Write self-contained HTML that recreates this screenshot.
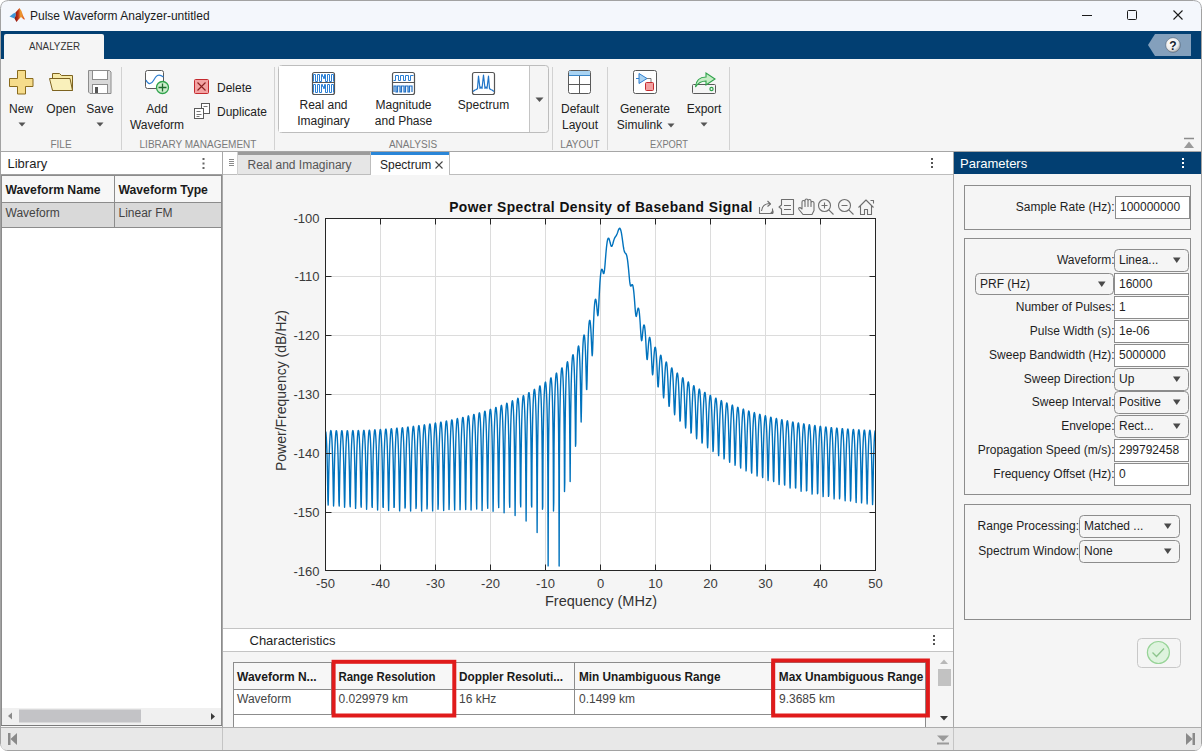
<!DOCTYPE html>
<html><head><meta charset="utf-8">
<style>
*{box-sizing:border-box;margin:0;padding:0}
html,body{width:1202px;height:751px;overflow:hidden;background:#ffffff}
svg{position:absolute;left:0;top:0;display:block}
text{font-family:"Liberation Sans",sans-serif}
</style></head><body>
<svg width="1202" height="751" viewBox="0 0 1202 751">
<defs>
<radialGradient id="hg" cx="0.4" cy="0.35" r="0.75"><stop offset="0" stop-color="#ffffff"/><stop offset="0.6" stop-color="#ececec"/><stop offset="1" stop-color="#8f8f8f"/></radialGradient>
<clipPath id="axclip"><rect x="325.5" y="218.5" width="550" height="352"/></clipPath>
<clipPath id="winclip"><rect x="0" y="0" width="1202" height="751" rx="8" ry="8"/></clipPath>
</defs>
<g clip-path="url(#winclip)">
<!-- window background -->
<rect x="0" y="0" width="1202" height="751" fill="#f5f5f5"/>
<!-- title bar -->
<rect x="0" y="0" width="1202" height="31" fill="#f4f7fc"/>
<defs><linearGradient id="lg" x1="0" y1="0" x2="1" y2="0"><stop offset="0" stop-color="#7a1510"/><stop offset="0.35" stop-color="#c0321a"/><stop offset="0.6" stop-color="#f0a232"/><stop offset="1" stop-color="#d8401c"/></linearGradient></defs>
<path d="M9.5 16.5 L13.5 13.5 L15.5 12.5 L16 15 L14.5 18.5 L12 17.5 Z" fill="#3d95d8"/>
<path d="M15.5 12.5 L19.5 8 L21.5 11 L23 15.5 L25 19.5 L23.5 19.2 L21 17 L18.5 19.5 L16.5 22 L14.5 18.5 L16 15 Z" fill="url(#lg)"/>
<text x="30" y="19.5" font-size="12" fill="#1b1b1b">Pulse Waveform Analyzer-untitled</text>
<line x1="1082" y1="15.5" x2="1092" y2="15.5" stroke="#1b1b1b" stroke-width="1"/>
<rect x="1127.5" y="10.5" width="9" height="9" rx="1" fill="none" stroke="#1b1b1b" stroke-width="1"/>
<path d="M1173.5 10.5 L1182.5 19.5 M1182.5 10.5 L1173.5 19.5" stroke="#1b1b1b" stroke-width="1.1"/>
<!-- blue band -->
<rect x="0" y="31" width="1202" height="28" fill="#023f72"/>
<path d="M4 59 L4 36 Q4 34 6 34 L102 34 Q104 34 104 36 L104 59 Z" fill="#f5f5f5"/>
<text x="29" y="50" font-size="11" fill="#333" textLength="51" lengthAdjust="spacingAndGlyphs">ANALYZER</text>
<path d="M1155 34 L1191 34 L1191 56 L1155 56 L1148 45 Z" fill="#84a0bc"/>
<circle cx="1173" cy="45" r="7.3" fill="url(#hg)" stroke="#2b3f55" stroke-opacity="0.55" stroke-width="0.8"/>
<text x="1173" y="49.5" font-size="12" font-weight="bold" text-anchor="middle" fill="#15212e">?</text>
<!-- toolstrip -->
<rect x="0" y="59" width="1202" height="92" fill="#f5f5f5"/>
<line x1="0" y1="151.5" x2="1202" y2="151.5" stroke="#a6a6a6" stroke-width="1"/>
<!-- FILE -->
<path d="M17.5 70.5 h8 v8 h7.5 v8 h-7.5 v7.5 h-8 v-7.5 h-8 v-8 h8 z" fill="#f6dc8b" stroke="#8a6b1c" stroke-width="1"/>
<path d="M52.5 90.5 V73.5 H59.5 L61.5 75.5 H72.5 V90.5 Z" fill="#f6e9a6" stroke="#7d6320" stroke-width="1"/>
<path d="M49.5 78.5 H70 L72.5 90.5 H52.5 Z" fill="#f9f0bb" stroke="#7d6320" stroke-width="1"/>
<path d="M88.5 70.5 h21 l1.5 1.5 v21.5 h-21 l-1.5 -1.5 z" fill="#d9d9d9" stroke="#8c8c8c" stroke-width="1"/>
<rect x="92.5" y="70.5" width="15" height="9" fill="#ffffff" stroke="#8c8c8c" stroke-width="1"/>
<rect x="92.5" y="84.5" width="15" height="9" fill="#ffffff" stroke="#8c8c8c" stroke-width="1"/>
<rect x="95" y="87" width="3" height="6" fill="#555"/>
<text x="21" y="113" font-size="12" text-anchor="middle" fill="#222">New</text>
<text x="61" y="113" font-size="12" text-anchor="middle" fill="#222">Open</text>
<text x="100" y="113" font-size="12" text-anchor="middle" fill="#222">Save</text>
<path d="M18.5 122.5 h7 l-3.5 4 z" fill="#555"/>
<path d="M96.5 122.5 h7 l-3.5 4 z" fill="#555"/>
<text x="61" y="148" font-size="10" text-anchor="middle" fill="#7a7a7a">FILE</text>
<line x1="121.5" y1="67" x2="121.5" y2="150" stroke="#d2d2d2"/>
<!-- LIBRARY MANAGEMENT -->
<rect x="145.5" y="70.5" width="18" height="18" rx="2" fill="#fff" stroke="#5a5a5a"/>
<path d="M146 80 C148 84.5,151 85,153.5 80.5 S158 73,163.5 77" fill="none" stroke="#2f7fd0" stroke-width="1.2"/>
<circle cx="162.5" cy="87.5" r="6" fill="#cdeecd" stroke="#2ea24a" stroke-width="1.3"/>
<path d="M162.5 83.5 v8 M158.5 87.5 h8" stroke="#1f6b2e" stroke-width="1.3"/>
<text x="157" y="113" font-size="12" text-anchor="middle" fill="#222">Add</text>
<text x="157" y="128.7" font-size="12" text-anchor="middle" fill="#222">Waveform</text>
<rect x="194.5" y="79.5" width="14" height="14" rx="1" fill="#f3a3a3" stroke="#c42a2f"/>
<path d="M197.5 82.5 L205.5 90.5 M205.5 82.5 L197.5 90.5" stroke="#8a1f1f" stroke-width="1.1"/>
<text x="217" y="91.6" font-size="12" fill="#222">Delete</text>
<rect x="201.5" y="103.5" width="8" height="10" fill="#fff" stroke="#5a5a5a"/>
<rect x="194.5" y="108.5" width="9" height="10" fill="#fff" stroke="#5a5a5a"/>
<path d="M203.5 106.5 h4 M196.5 111.5 h4 M196.5 114.5 h5 M196.5 116.5 h3" stroke="#777"/>
<text x="217" y="115.7" font-size="12" fill="#222">Duplicate</text>
<text x="198" y="148" font-size="10" text-anchor="middle" fill="#7a7a7a">LIBRARY MANAGEMENT</text>
<line x1="274.5" y1="67" x2="274.5" y2="150" stroke="#d2d2d2"/>
<!-- ANALYSIS gallery -->
<rect x="278.5" y="65.5" width="270" height="67" rx="3" fill="#f5f5f5" stroke="#bdbdbd"/>
<rect x="279" y="66" width="250" height="66" fill="#ffffff"/>
<line x1="529.5" y1="66" x2="529.5" y2="132" stroke="#c4c4c4"/>
<path d="M535.5 97.5 h8 l-4 4.5 z" fill="#555"/>
<rect x="312.5" y="72.5" width="22" height="22" rx="2" fill="#fff" stroke="#555" stroke-width="1.2"/>
<line x1="313" y1="82.5" x2="334" y2="82.5" stroke="#555" stroke-width="1"/>
<path d="M313.5 81.5 H313.5 V74.5 H315.5 V81.5 H317.5 V74.5 H319.5 V81.5 H321.5 V74.5 H322.5 V76.5 H323.5 V78.5 H324.5 V74.5 H325.5 M325.5 74.5 H325.5 V81.5 H327.5 V74.5 H329.5 V81.5 H331.5 V74.5 H333.5 V81.5" fill="none" stroke="#2a7fd4" stroke-width="1"/>
<path d="M313.5 92.5 H313.5 V84.5 H315.5 V92.5 H317.5 V84.5 H319.5 V92.5 H321.5 V84.5 H322.5 V86.5 H323.5 V88.5 H324.5 V84.5 H325.5 M325.5 84.5 H325.5 V92.5 H327.5 V84.5 H329.5 V92.5 H331.5 V84.5 H333.5 V92.5" fill="none" stroke="#2a7fd4" stroke-width="1"/>
<rect x="392.5" y="72.5" width="22" height="22" rx="2" fill="#fff" stroke="#555" stroke-width="1.2"/>
<line x1="393" y1="82.5" x2="414" y2="82.5" stroke="#555" stroke-width="1"/>
<path d="M393.5 80.5 H395.5 V75.5 H398.5 V80.5 H400.5 V75.5 H403.5 V80.5 H405.5 V75.5 H408.5 V80.5 H410.5 V75.5 H413.5" fill="none" stroke="#2a7fd4" stroke-width="1"/>
<path d="M394 92 V86 H396 V92 H397.5 V86 H400 V92 H401.5 V86 H404 V92 H405.5 V86 H408 V92 H409.5 V86 H412 V92" fill="none" stroke="#1f6fc4" stroke-width="1.2"/>
<rect x="472.5" y="72.5" width="22" height="22" rx="2" fill="#fff" stroke="#555" stroke-width="1.2"/>
<path d="M473 91.5 L475 90 L476.5 89.5 L477.5 88.5 L478.5 76 L480 88.5 L481 87 L482 88.5 L483.5 75 L485 88.5 L486 87 L487 88.5 L488.5 76 L489.5 88.5 L490.5 89.5 L492 90 L494 91.5" fill="none" stroke="#1f74c8" stroke-width="1.2" stroke-linejoin="round"/>
<text x="323.5" y="109" font-size="12" text-anchor="middle" fill="#222">Real and</text>
<text x="323.5" y="124.6" font-size="12" text-anchor="middle" fill="#222">Imaginary</text>
<text x="403.5" y="109" font-size="12" text-anchor="middle" fill="#222">Magnitude</text>
<text x="403.5" y="124.6" font-size="12" text-anchor="middle" fill="#222">and Phase</text>
<text x="483.5" y="109" font-size="12" text-anchor="middle" fill="#222">Spectrum</text>
<text x="413" y="148" font-size="10" text-anchor="middle" fill="#7a7a7a">ANALYSIS</text>
<line x1="552.5" y1="67" x2="552.5" y2="150" stroke="#d2d2d2"/>
<!-- LAYOUT -->
<rect x="568.5" y="70.5" width="22" height="23" rx="2" fill="#fff" stroke="#5a5a5a"/>
<rect x="569" y="71" width="21" height="4" fill="#a9d3f2"/>
<line x1="569" y1="75.5" x2="590" y2="75.5" stroke="#3a86c8"/>
<path d="M569 84.5 h21 M579.5 76 v17" stroke="#5a5a5a"/>
<text x="580" y="112.6" font-size="12" text-anchor="middle" fill="#222">Default</text>
<text x="580" y="128.5" font-size="12" text-anchor="middle" fill="#222">Layout</text>
<text x="580" y="148" font-size="10" text-anchor="middle" fill="#7a7a7a">LAYOUT</text>
<line x1="607.5" y1="67" x2="607.5" y2="150" stroke="#d2d2d2"/>
<!-- EXPORT -->
<rect x="633.5" y="70.5" width="23" height="23" rx="2" fill="#fff" stroke="#5a5a5a"/>
<path d="M636 78.5 h3 M649 78.5 h0 M639 73.5 v10 l8 -5 z" fill="#a9d3f2" stroke="#2f7fd0" stroke-width="1"/>
<path d="M647 78.5 h4 v4" fill="none" stroke="#5a5a5a" stroke-width="0.8"/>
<rect x="645.5" y="82.5" width="8" height="8" rx="1" fill="#f2a0a0" stroke="#c42a2f"/>
<text x="645" y="112.6" font-size="12" text-anchor="middle" fill="#222">Generate</text>
<text x="639.5" y="128.5" font-size="12" text-anchor="middle" fill="#222">Simulink</text>
<path d="M667.5 123.5 h7 l-3.5 4 z" fill="#555"/>
<rect x="692.5" y="84.5" width="23" height="9" rx="1" fill="#f5f5f5" stroke="#5a5a5a"/>
<circle cx="711.5" cy="89" r="1.6" fill="none" stroke="#2ea24a" stroke-width="1.2"/>
<path d="M695.5 87 C696 80,700 77,706 77 L706 73 L715 79 L706 85 L706 81 C701 81,698 83,695.5 87 Z" fill="#c5ecc5" stroke="#2ea24a" stroke-width="1.1"/>
<text x="704" y="112.6" font-size="12" text-anchor="middle" fill="#222">Export</text>
<path d="M700.5 122.5 h7 l-3.5 4 z" fill="#555"/>
<text x="669" y="148" font-size="10" text-anchor="middle" fill="#7a7a7a" textLength="38" lengthAdjust="spacingAndGlyphs">EXPORT</text>
<line x1="729.5" y1="67" x2="729.5" y2="150" stroke="#d2d2d2"/>
<!-- collapse toolstrip -->
<path d="M1184 138.5 h10" stroke="#8c8c8c" stroke-width="1.5"/>
<path d="M1184 148 l5 -6.5 5 6.5 z" fill="#9a9a9a"/>
<!-- ===== LIBRARY PANEL ===== -->
<rect x="1" y="152" width="221" height="575" fill="#ffffff"/>
<line x1="1" y1="174.5" x2="222" y2="174.5" stroke="#a0a0a0"/>
<text x="7.5" y="168" font-size="13" fill="#1e1e1e">Library</text>
<g fill="#666"><rect x="202.5" y="158" width="2" height="2"/><rect x="202.5" y="162.5" width="2" height="2"/><rect x="202.5" y="167" width="2" height="2"/></g>
<rect x="1.5" y="175.5" width="220" height="550" fill="#ffffff" stroke="#8c8c8c"/>
<rect x="2" y="176" width="219" height="26" fill="#f7f7f7"/>
<rect x="2" y="203" width="219" height="24" fill="#d9d9d9"/>
<line x1="2" y1="202.5" x2="221" y2="202.5" stroke="#8c8c8c"/>
<line x1="2" y1="227.5" x2="221" y2="227.5" stroke="#8c8c8c"/>
<line x1="114.5" y1="176" x2="114.5" y2="227" stroke="#8c8c8c"/>
<text x="5.5" y="193.5" font-size="12.2" font-weight="bold" fill="#1a1a1a">Waveform Name</text>
<text x="118.5" y="193.5" font-size="12.2" font-weight="bold" fill="#1a1a1a">Waveform Type</text>
<text x="5.5" y="216.5" font-size="12" fill="#444">Waveform</text>
<text x="118.5" y="216.5" font-size="12" fill="#444">Linear FM</text>
<!-- library h-scrollbar -->
<rect x="2" y="708" width="219" height="17" fill="#f0f0f0"/>
<rect x="19" y="709.5" width="122" height="13" fill="#c3c3c6"/>
<path d="M8 716 l4 -3.5 v7 z" fill="#8a8a8a"/>
<path d="M215 716.5 l-4 -3.5 v7 z" fill="#3a3a3a"/>
<line x1="1" y1="725.5" x2="222" y2="725.5" stroke="#7a7a7a"/><rect x="1" y="726" width="221" height="1" fill="#f7f7f7"/>
<line x1="222.5" y1="152" x2="222.5" y2="727" stroke="#a8a8a8"/>

<!-- ===== CENTER ===== -->
<rect x="223" y="152" width="730" height="23" fill="#ffffff"/>
<line x1="223" y1="174.5" x2="953" y2="174.5" stroke="#bdbdbd"/>
<path d="M229 159.5 h5 M229 161.5 h5 M229 163.5 h5 M229 165.5 h5" stroke="#8a8a8a"/>
<line x1="237.5" y1="152" x2="237.5" y2="175" stroke="#d0d0d0"/>
<rect x="238" y="152" width="133" height="23" fill="#e6e6e6"/>
<rect x="238" y="152" width="133" height="3" fill="#9c9c9c"/>
<line x1="370.5" y1="152" x2="370.5" y2="175" stroke="#bdbdbd"/><line x1="238" y1="174.5" x2="371" y2="174.5" stroke="#bdbdbd"/>
<text x="247.5" y="168.5" font-size="12" fill="#555">Real and Imaginary</text>
<rect x="371" y="152" width="78" height="23" fill="#ffffff"/>
<rect x="371" y="152" width="78" height="3" fill="#2a86d8"/>
<line x1="449.5" y1="152" x2="449.5" y2="175" stroke="#bdbdbd"/>
<text x="380" y="168.5" font-size="12" fill="#1e1e1e">Spectrum</text>
<path d="M435.5 161.5 l7 7 M442.5 161.5 l-7 7" stroke="#444" stroke-width="1.1"/>
<g fill="#555"><rect x="931" y="158" width="2" height="2"/><rect x="931" y="162" width="2" height="2"/><rect x="931" y="166" width="2" height="2"/></g>
<rect x="223" y="175" width="730" height="453" fill="#f5f5f5"/>
<line x1="223" y1="628.5" x2="953" y2="628.5" stroke="#c4c4c4"/>
<rect x="223" y="629" width="730" height="22" fill="#ffffff"/>
<line x1="223" y1="651.5" x2="953" y2="651.5" stroke="#c4c4c4"/>
<text x="249.5" y="644.8" font-size="13" fill="#1e1e1e">Characteristics</text>
<g fill="#555"><rect x="933" y="635" width="2" height="2"/><rect x="933" y="639" width="2" height="2"/><rect x="933" y="643" width="2" height="2"/></g>
<rect x="223" y="652" width="730" height="75" fill="#f5f5f5"/>
<rect x="233.5" y="662.5" width="692" height="65" fill="#ffffff" stroke="#8c8c8c"/>
<rect x="234" y="663" width="691" height="26" fill="#f7f7f7"/>
<line x1="234" y1="689.5" x2="925" y2="689.5" stroke="#8c8c8c"/>
<line x1="234" y1="714.5" x2="925" y2="714.5" stroke="#8c8c8c"/>
<path d="M331.5 663 v51 M455.5 663 v51 M574.5 663 v51 M771.5 663 v51" stroke="#8c8c8c"/>
<text x="237" y="680.5" font-size="12" font-weight="bold" fill="#1a1a1a">Waveform N...</text>
<text x="338.5" y="680.5" font-size="12" font-weight="bold" fill="#1a1a1a" textLength="97" lengthAdjust="spacingAndGlyphs">Range Resolution</text>
<text x="459" y="680.5" font-size="12" font-weight="bold" fill="#1a1a1a" textLength="104" lengthAdjust="spacingAndGlyphs">Doppler Resoluti...</text>
<text x="579" y="680.5" font-size="12" font-weight="bold" fill="#1a1a1a" textLength="141.5" lengthAdjust="spacingAndGlyphs">Min Unambiguous Range</text>
<text x="778.8" y="680.5" font-size="12" font-weight="bold" fill="#1a1a1a" textLength="144.5" lengthAdjust="spacingAndGlyphs">Max Unambiguous Range</text>
<text x="237" y="703.3" font-size="12" fill="#444">Waveform</text>
<text x="338.5" y="703.3" font-size="12" fill="#444">0.029979 km</text>
<text x="459" y="703.3" font-size="12" fill="#444">16 kHz</text>
<text x="579" y="703.3" font-size="12" fill="#444">0.1499 km</text>
<text x="779" y="703.3" font-size="12" fill="#444">9.3685 km</text>
<!-- v scrollbar -->
<rect x="937" y="652" width="16" height="75" fill="#f5f5f5"/>
<path d="M940 664 l4 -4.5 4 4.5 z" fill="#b8b8b8"/>
<rect x="938" y="669" width="13" height="17" fill="#c2c2c2"/>
<path d="M940 716 l4 4.5 4 -4.5 z" fill="#3a3a3a"/>
<!-- red highlight boxes -->
<rect x="333.6" y="661.8" width="120.7" height="53.7" fill="none" stroke="#e01b1b" stroke-width="4"/>
<rect x="773.2" y="660.5" width="154.7" height="55" fill="none" stroke="#e01b1b" stroke-width="4"/>
<line x1="953.5" y1="152" x2="953.5" y2="751" stroke="#a8a8a8"/>

<!-- ===== PARAMETERS ===== -->
<rect x="954" y="152" width="247" height="22" fill="#023f72"/>
<text x="960" y="167.8" font-size="13" fill="#ffffff">Parameters</text>
<g fill="#ffffff"><rect x="1182" y="158" width="2" height="2"/><rect x="1182" y="162" width="2" height="2"/><rect x="1182" y="166" width="2" height="2"/></g>
<rect x="954" y="174" width="247" height="553" fill="#f5f5f5"/>
<rect x="964.5" y="185.5" width="226" height="44" fill="none" stroke="#8c8c8c"/>
<rect x="964.5" y="238.5" width="226" height="256" fill="none" stroke="#8c8c8c"/>
<rect x="964.5" y="504.5" width="226" height="115" fill="none" stroke="#8c8c8c"/>
<text x="1114.5" y="211" font-size="12" text-anchor="end" fill="#1e1e1e">Sample Rate (Hz):</text>
<rect x="1115.5" y="196.5" width="74" height="22" fill="#ffffff" stroke="#8c8c8c"/><text x="1120" y="211" font-size="12" fill="#1e1e1e">100000000</text>
<text x="1114.5" y="264" font-size="12" text-anchor="end" fill="#1e1e1e">Waveform:</text>
<rect x="1114.5" y="249.5" width="74" height="22" rx="4" fill="#f5f5f5" stroke="#8c8c8c"/><text x="1119" y="264" font-size="12" fill="#1e1e1e">Linea...</text><path d="M1173 257.5 h7.5 l-3.75 5.5 z" fill="#4a4a4a"/>
<rect x="975.5" y="273.5" width="138" height="21" rx="4" fill="#f5f5f5" stroke="#8c8c8c"/><text x="980" y="288" font-size="12" fill="#1e1e1e">PRF (Hz)</text><path d="M1098 281.5 h7.5 l-3.75 5.5 z" fill="#4a4a4a"/>
<rect x="1114.5" y="273.5" width="74" height="21" fill="#ffffff" stroke="#8c8c8c"/><text x="1119" y="288" font-size="12" fill="#1e1e1e">16000</text>
<text x="1114.5" y="311" font-size="12" text-anchor="end" fill="#1e1e1e">Number of Pulses:</text>
<rect x="1114.5" y="296.5" width="74" height="22" fill="#ffffff" stroke="#8c8c8c"/><text x="1119" y="311" font-size="12" fill="#1e1e1e">1</text>
<text x="1114.5" y="335" font-size="12" text-anchor="end" fill="#1e1e1e">Pulse Width (s):</text>
<rect x="1114.5" y="320.5" width="74" height="22" fill="#ffffff" stroke="#8c8c8c"/><text x="1119" y="335" font-size="12" fill="#1e1e1e">1e-06</text>
<text x="1114.5" y="359" font-size="12" text-anchor="end" fill="#1e1e1e">Sweep Bandwidth (Hz):</text>
<rect x="1114.5" y="344.5" width="74" height="22" fill="#ffffff" stroke="#8c8c8c"/><text x="1119" y="359" font-size="12" fill="#1e1e1e">5000000</text>
<text x="1114.5" y="383" font-size="12" text-anchor="end" fill="#1e1e1e">Sweep Direction:</text>
<rect x="1114.5" y="368.5" width="74" height="22" rx="4" fill="#f5f5f5" stroke="#8c8c8c"/><text x="1119" y="383" font-size="12" fill="#1e1e1e">Up</text><path d="M1173 376.5 h7.5 l-3.75 5.5 z" fill="#4a4a4a"/>
<text x="1114.5" y="406" font-size="12" text-anchor="end" fill="#1e1e1e">Sweep Interval:</text>
<rect x="1114.5" y="391.5" width="74" height="22" rx="4" fill="#f5f5f5" stroke="#8c8c8c"/><text x="1119" y="406" font-size="12" fill="#1e1e1e">Positive</text><path d="M1173 399.5 h7.5 l-3.75 5.5 z" fill="#4a4a4a"/>
<text x="1114.5" y="430" font-size="12" text-anchor="end" fill="#1e1e1e">Envelope:</text>
<rect x="1114.5" y="415.5" width="74" height="22" rx="4" fill="#f5f5f5" stroke="#8c8c8c"/><text x="1119" y="430" font-size="12" fill="#1e1e1e">Rect...</text><path d="M1173 423.5 h7.5 l-3.75 5.5 z" fill="#4a4a4a"/>
<text x="1114.5" y="454" font-size="12" text-anchor="end" fill="#1e1e1e">Propagation Speed (m/s):</text>
<rect x="1114.5" y="439.5" width="74" height="22" fill="#ffffff" stroke="#8c8c8c"/><text x="1119" y="454" font-size="12" fill="#1e1e1e">299792458</text>
<text x="1114.5" y="478" font-size="12" text-anchor="end" fill="#1e1e1e">Frequency Offset (Hz):</text>
<rect x="1114.5" y="463.5" width="74" height="22" fill="#ffffff" stroke="#8c8c8c"/><text x="1119" y="478" font-size="12" fill="#1e1e1e">0</text>
<text x="1079" y="530" font-size="12" text-anchor="end" fill="#1e1e1e">Range Processing:</text>
<rect x="1079.5" y="515.5" width="100" height="22" rx="4" fill="#f5f5f5" stroke="#8c8c8c"/><text x="1084" y="530" font-size="12" fill="#1e1e1e">Matched ...</text><path d="M1164 523.5 h7.5 l-3.75 5.5 z" fill="#4a4a4a"/>
<text x="1079" y="555" font-size="12" text-anchor="end" fill="#1e1e1e">Spectrum Window:</text>
<rect x="1079.5" y="540.5" width="100" height="22" rx="4" fill="#f5f5f5" stroke="#8c8c8c"/><text x="1084" y="555" font-size="12" fill="#1e1e1e">None</text><path d="M1164 548.5 h7.5 l-3.75 5.5 z" fill="#4a4a4a"/>

<!-- apply button -->
<rect x="1137.5" y="638.5" width="43" height="29" rx="4" fill="#f5f5f5" stroke="#c8c8c8"/>
<circle cx="1158.4" cy="652.5" r="11" fill="#def3de" stroke="#98d498" stroke-width="1.2"/>
<path d="M1152.5 652.5 l4 4 l7.5 -8" fill="none" stroke="#8cc48c" stroke-width="1.3"/>

<!-- ===== STATUS BAR ===== -->
<rect x="0" y="728" width="1202" height="23" fill="#e8e8e8"/>
<line x1="0" y1="727.5" x2="1202" y2="727.5" stroke="#adadad"/>
<line x1="953.5" y1="728" x2="953.5" y2="751" stroke="#c4c4c4"/><line x1="222.5" y1="728" x2="222.5" y2="751" stroke="#c4c4c4"/>
<rect x="8" y="733" width="2.5" height="12" fill="#8a8a8a"/>
<path d="M17 733 v12 l-6.5 -6 z" fill="#8a8a8a"/>
<path d="M937 735.5 h12 l-6 6 z" fill="#9a9a9a"/>
<rect x="937" y="742.5" width="12" height="2" fill="#9a9a9a"/>
<rect x="1192.5" y="733" width="2.5" height="12" fill="#8a8a8a"/>
<path d="M1186 733 v12 l6.5 -6 z" fill="#8a8a8a"/>
<!-- window border -->
<path d="M8.5 0.5 H1193.5 Q1201.5 0.5 1201.5 8.5 V744.5 Q1201.5 750.5 1195.5 750.5 H6.5 Q0.5 750.5 0.5 744.5 V8.5 Q0.5 0.5 8.5 0.5 Z" fill="none" stroke="#a2a2a2"/>
</g>
<!-- ===== PLOT ===== -->
<rect x="325.5" y="218.5" width="550" height="352" fill="#ffffff"/>
<g stroke="#dcdcdc" stroke-width="1">
<path d="M380.5 219 v351 M435.5 219 v351 M490.5 219 v351 M545.5 219 v351 M600.5 219 v351 M655.5 219 v351 M710.5 219 v351 M765.5 219 v351 M820.5 219 v351"/>
<path d="M326 276.5 h549 M326 335.5 h549 M326 394.5 h549 M326 453.5 h549 M326 512.5 h549"/>
</g>
<path clip-path="url(#axclip)" d="M325.77 431.7L326.04 434.1L326.31 437.8L326.57 442.9L326.84 449.8L327.11 458.8L327.38 470.4L327.65 485.2L327.92 500.7L328.19 505.1L328.45 492.6L328.72 476.8L328.99 463.7L329.26 453.6L329.53 445.8L329.80 440.0L330.07 435.7L330.33 432.8L330.60 431.1L330.87 430.6L331.14 431.2L331.41 433.0L331.68 436.0L331.95 440.4L332.21 446.4L332.48 454.3L332.75 464.7L333.02 478.0L333.29 494.0L333.56 506.0L333.83 500.3L334.09 484.5L334.36 469.8L334.63 458.3L334.90 449.4L335.17 442.7L335.44 437.7L335.71 434.1L335.97 431.8L336.24 430.7L336.51 430.8L336.78 432.0L337.05 434.4L337.32 438.2L337.58 443.4L337.85 450.3L338.12 459.5L338.39 471.4L338.66 486.4L338.93 502.2L339.20 506.0L339.46 492.7L339.73 476.7L340.00 463.6L340.27 453.5L340.54 445.8L340.81 439.9L341.08 435.7L341.34 432.8L341.61 431.2L341.88 430.7L342.15 431.3L342.42 433.1L342.69 436.2L342.96 440.7L343.22 446.8L343.49 454.8L343.76 465.3L344.03 479.0L344.30 495.3L344.57 507.3L344.84 500.7L345.10 484.3L345.37 469.6L345.64 458.1L345.91 449.2L346.18 442.5L346.45 437.5L346.72 434.0L346.98 431.8L347.25 430.7L347.52 430.8L347.79 432.1L348.06 434.6L348.33 438.3L348.60 443.6L348.86 450.7L349.13 460.0L349.40 472.1L349.67 487.5L349.94 503.6L350.21 506.7L350.48 492.5L350.74 476.3L351.01 463.2L351.28 453.2L351.55 445.5L351.82 439.7L352.09 435.5L352.36 432.6L352.62 431.0L352.89 430.6L353.16 431.3L353.43 433.1L353.70 436.3L353.97 440.8L354.24 447.0L354.50 455.1L354.77 465.9L355.04 479.8L355.31 496.5L355.58 508.4L355.85 500.7L356.12 483.9L356.38 469.1L356.65 457.6L356.92 448.8L357.19 442.2L357.46 437.2L357.73 433.7L358.00 431.5L358.26 430.5L358.53 430.7L358.80 432.0L359.07 434.5L359.34 438.3L359.61 443.7L359.88 450.8L360.14 460.3L360.41 472.6L360.68 488.4L360.95 504.8L361.22 507.2L361.49 492.2L361.75 475.7L362.02 462.6L362.29 452.6L362.56 445.0L362.83 439.2L363.10 435.1L363.37 432.3L363.63 430.7L363.90 430.3L364.17 431.0L364.44 432.9L364.71 436.1L364.98 440.7L365.25 447.0L365.51 455.3L365.78 466.2L366.05 480.4L366.32 497.5L366.59 509.3L366.86 500.5L367.13 483.3L367.39 468.4L367.66 456.9L367.93 448.2L368.20 441.6L368.47 436.7L368.74 433.2L369.01 431.1L369.27 430.1L369.54 430.3L369.81 431.6L370.08 434.2L370.35 438.1L370.62 443.5L370.89 450.8L371.15 460.4L371.42 473.0L371.69 489.1L371.96 505.8L372.23 507.4L372.50 491.6L372.77 475.0L373.03 461.9L373.30 451.9L373.57 444.3L373.84 438.6L374.11 434.5L374.38 431.7L374.65 430.1L374.91 429.8L375.18 430.6L375.45 432.5L375.72 435.8L375.99 440.4L376.26 446.8L376.53 455.2L376.79 466.3L377.06 480.8L377.33 498.4L377.60 510.0L377.87 500.1L378.14 482.4L378.41 467.5L378.67 456.1L378.94 447.4L379.21 440.8L379.48 435.9L379.75 432.5L380.02 430.4L380.29 429.5L380.55 429.7L380.82 431.1L381.09 433.7L381.36 437.7L381.63 443.2L381.90 450.6L382.17 460.3L382.43 473.1L382.70 489.7L382.97 506.7L383.24 507.4L383.51 490.7L383.78 474.0L384.04 460.9L384.31 450.9L384.58 443.4L384.85 437.7L385.12 433.6L385.39 430.9L385.66 429.4L385.92 429.1L386.19 429.9L386.46 431.9L386.73 435.2L387.00 439.9L387.27 446.4L387.54 454.9L387.80 466.2L388.07 481.0L388.34 499.1L388.61 510.5L388.88 499.5L389.15 481.4L389.42 466.4L389.68 455.0L389.95 446.3L390.22 439.8L390.49 435.0L390.76 431.6L391.03 429.5L391.30 428.6L391.56 428.9L391.83 430.3L392.10 433.0L392.37 437.0L392.64 442.6L392.91 450.1L393.18 460.0L393.44 473.1L393.71 490.1L393.98 507.4L394.25 507.2L394.52 489.7L394.79 472.7L395.06 459.7L395.32 449.7L395.59 442.2L395.86 436.6L396.13 432.6L396.40 429.9L396.67 428.4L396.94 428.1L397.20 429.0L397.47 431.1L397.74 434.4L398.01 439.2L398.28 445.8L398.55 454.4L398.82 465.9L399.08 481.1L399.35 499.7L399.62 510.9L399.89 498.6L400.16 480.1L400.43 465.1L400.70 453.7L400.96 445.1L401.23 438.6L401.50 433.8L401.77 430.5L402.04 428.4L402.31 427.6L402.58 427.9L402.84 429.4L403.11 432.1L403.38 436.2L403.65 441.8L403.92 449.4L404.19 459.5L404.46 472.9L404.72 490.3L404.99 508.0L405.26 506.8L405.53 488.4L405.80 471.3L406.07 458.2L406.33 448.4L406.60 440.9L406.87 435.3L407.14 431.3L407.41 428.7L407.68 427.2L407.95 427.0L408.21 427.9L408.48 430.0L408.75 433.4L409.02 438.3L409.29 444.9L409.56 453.7L409.83 465.4L410.09 481.0L410.36 500.1L410.63 511.0L410.90 497.5L411.17 478.5L411.44 463.5L411.71 452.2L411.97 443.6L412.24 437.1L412.51 432.4L412.78 429.1L413.05 427.1L413.32 426.3L413.59 426.6L413.85 428.2L414.12 430.9L414.39 435.1L414.66 440.8L414.93 448.5L415.20 458.8L415.47 472.4L415.73 490.4L416.00 508.5L416.27 506.1L416.54 486.9L416.81 469.6L417.08 456.6L417.35 446.7L417.61 439.3L417.88 433.8L418.15 429.8L418.42 427.2L418.69 425.8L418.96 425.6L419.23 426.5L419.49 428.7L419.76 432.2L420.03 437.1L420.30 443.8L420.57 452.8L420.84 464.7L421.11 480.7L421.37 500.4L421.64 511.0L421.91 496.1L422.18 476.8L422.45 461.7L422.72 450.4L422.99 441.9L423.25 435.5L423.52 430.8L423.79 427.5L424.06 425.5L424.33 424.8L424.60 425.1L424.87 426.7L425.13 429.5L425.40 433.7L425.67 439.6L425.94 447.4L426.21 457.8L426.48 471.8L426.75 490.3L427.01 508.9L427.28 505.2L427.55 485.1L427.82 467.7L428.09 454.6L428.36 444.9L428.62 437.5L428.89 432.0L429.16 428.1L429.43 425.5L429.70 424.1L429.97 424.0L430.24 425.0L430.50 427.2L430.77 430.7L431.04 435.7L431.31 442.5L431.58 451.6L431.85 463.8L432.12 480.2L432.38 500.6L432.65 510.9L432.92 494.5L433.19 474.8L433.46 459.6L433.73 448.4L434.00 439.9L434.26 433.5L434.53 428.9L434.80 425.7L435.07 423.7L435.34 423.0L435.61 423.4L435.88 425.0L436.14 427.9L436.41 432.2L436.68 438.1L436.95 446.0L437.22 456.7L437.49 470.9L437.76 490.0L438.02 509.2L438.29 504.0L438.56 483.1L438.83 465.5L439.10 452.5L439.37 442.7L439.64 435.4L439.90 429.9L440.17 426.1L440.44 423.5L440.71 422.2L440.98 422.1L441.25 423.1L441.52 425.3L441.78 428.9L442.05 434.0L442.32 441.0L442.59 450.2L442.86 462.6L443.13 479.5L443.40 500.7L443.66 510.6L443.93 492.6L444.20 472.5L444.47 457.3L444.74 446.1L445.01 437.6L445.28 431.3L445.54 426.7L445.81 423.5L446.08 421.6L446.35 420.9L446.62 421.4L446.89 423.0L447.16 426.0L447.42 430.3L447.69 436.3L447.96 444.4L448.23 455.2L448.50 469.8L448.77 489.6L449.04 509.5L449.30 502.6L449.57 480.8L449.84 463.1L450.11 450.0L450.38 440.3L450.65 433.0L450.92 427.6L451.18 423.7L451.45 421.2L451.72 420.0L451.99 419.9L452.26 420.9L452.53 423.2L452.79 426.9L453.06 432.1L453.33 439.1L453.60 448.5L453.87 461.2L454.14 478.6L454.41 500.7L454.67 510.1L454.94 490.4L455.21 469.9L455.48 454.7L455.75 443.5L456.02 435.1L456.29 428.8L456.55 424.2L456.82 421.1L457.09 419.2L457.36 418.5L457.63 419.0L457.90 420.7L458.17 423.7L458.43 428.1L458.70 434.2L458.97 442.5L459.24 453.5L459.51 468.5L459.78 489.0L460.05 509.7L460.31 501.0L460.58 478.2L460.85 460.3L461.12 447.3L461.39 437.6L461.66 430.3L461.93 425.0L462.19 421.1L462.46 418.7L462.73 417.4L463.00 417.4L463.27 418.5L463.54 420.8L463.81 424.5L464.07 429.8L464.34 436.9L464.61 446.5L464.88 459.5L465.15 477.4L465.42 500.7L465.69 509.6L465.95 488.0L466.22 467.0L466.49 451.8L466.76 440.6L467.03 432.2L467.30 426.0L467.57 421.4L467.83 418.3L468.10 416.5L468.37 415.8L468.64 416.4L468.91 418.1L469.18 421.2L469.45 425.6L469.71 431.8L469.98 440.2L470.25 451.4L470.52 466.9L470.79 488.3L471.06 510.0L471.33 499.1L471.59 475.2L471.86 457.2L472.13 444.2L472.40 434.5L472.67 427.3L472.94 422.0L473.21 418.2L473.47 415.7L473.74 414.5L474.01 414.5L474.28 415.6L474.55 418.0L474.82 421.8L475.08 427.1L475.35 434.4L475.62 444.2L475.89 457.5L476.16 476.0L476.43 500.6L476.70 509.0L476.96 485.2L477.23 463.8L477.50 448.5L477.77 437.3L478.04 429.0L478.31 422.8L478.58 418.3L478.84 415.2L479.11 413.4L479.38 412.8L479.65 413.4L479.92 415.1L480.19 418.2L480.46 422.8L480.72 429.1L480.99 437.6L481.26 449.0L481.53 464.9L481.80 487.4L482.07 510.5L482.34 496.9L482.60 471.9L482.87 453.7L483.14 440.7L483.41 431.1L483.68 423.9L483.95 418.6L484.22 414.8L484.48 412.4L484.75 411.2L485.02 411.2L485.29 412.4L485.56 414.9L485.83 418.7L486.10 424.1L486.36 431.5L486.63 441.4L486.90 455.1L487.17 474.3L487.44 500.7L487.71 508.3L487.98 482.0L488.24 460.2L488.51 444.8L488.78 433.6L489.05 425.3L489.32 419.2L489.59 414.7L489.86 411.6L490.12 409.8L490.39 409.3L490.66 409.9L490.93 411.7L491.20 414.9L491.47 419.5L491.74 425.9L492.00 434.5L492.27 446.2L492.54 462.6L492.81 486.3L493.08 511.3L493.35 494.5L493.62 468.2L493.88 449.9L494.15 436.8L494.42 427.2L494.69 420.0L494.96 414.7L495.23 411.0L495.50 408.6L495.76 407.5L496.03 407.5L496.30 408.8L496.57 411.3L496.84 415.1L497.11 420.6L497.38 428.1L497.64 438.3L497.91 452.3L498.18 472.4L498.45 500.9L498.72 507.6L498.99 478.5L499.25 456.1L499.52 440.7L499.79 429.5L500.06 421.2L500.33 415.1L500.60 410.6L500.87 407.6L501.13 405.8L501.40 405.3L501.67 406.0L501.94 407.8L502.21 411.0L502.48 415.7L502.75 422.2L503.01 431.0L503.28 443.0L503.55 459.9L503.82 485.1L504.09 512.8L504.36 491.6L504.63 464.1L504.89 445.5L505.16 432.4L505.43 422.8L505.70 415.6L505.97 410.4L506.24 406.7L506.51 404.3L506.77 403.2L507.04 403.3L507.31 404.6L507.58 407.1L507.85 411.0L508.12 416.6L508.39 424.2L508.65 434.6L508.92 449.0L509.19 470.0L509.46 501.5L509.73 507.2L510.00 474.4L510.27 451.5L510.53 436.0L510.80 424.8L511.07 416.5L511.34 410.4L511.61 406.0L511.88 403.0L512.15 401.3L512.41 400.7L512.68 401.4L512.95 403.3L513.22 406.6L513.49 411.3L513.76 417.9L514.03 426.9L514.29 439.2L514.56 456.7L514.83 483.8L515.10 515.6L515.37 488.4L515.64 459.3L515.91 440.5L516.17 427.4L516.44 417.8L516.71 410.7L516.98 405.4L517.25 401.7L517.52 399.4L517.79 398.3L518.05 398.4L518.32 399.7L518.59 402.3L518.86 406.3L519.13 411.9L519.40 419.7L519.67 430.2L519.93 445.1L520.20 467.2L520.47 502.8L520.74 506.9L521.01 469.8L521.28 446.3L521.54 430.6L521.81 419.4L522.08 411.2L522.35 405.1L522.62 400.6L522.89 397.7L523.16 396.0L523.42 395.5L523.69 396.2L523.96 398.1L524.23 401.4L524.50 406.2L524.77 412.9L525.04 422.0L525.30 434.6L525.57 452.9L525.84 482.2L526.11 521.0L526.38 484.6L526.65 453.9L526.92 434.8L527.18 421.6L527.45 412.0L527.72 404.9L527.99 399.7L528.26 396.0L528.53 393.7L528.80 392.6L529.06 392.7L529.33 394.1L529.60 396.7L529.87 400.7L530.14 406.5L530.41 414.3L530.68 425.1L530.94 440.4L531.21 463.8L531.48 505.2L531.75 507.0L532.02 464.3L532.29 440.2L532.56 424.5L532.82 413.2L533.09 405.0L533.36 398.9L533.63 394.5L533.90 391.5L534.17 389.8L534.44 389.3L534.70 390.1L534.97 392.0L535.24 395.4L535.51 400.2L535.78 407.0L536.05 416.3L536.32 429.2L536.58 448.1L536.85 480.2L537.12 532.6L537.39 479.9L537.66 447.5L537.93 428.2L538.20 414.9L538.46 405.3L538.73 398.2L539.00 393.0L539.27 389.3L539.54 387.0L539.81 385.9L540.08 386.1L540.34 387.4L540.61 390.1L540.88 394.1L541.15 399.9L541.42 407.9L541.69 418.9L541.96 434.6L542.22 459.3L542.49 509.2L542.76 506.7L543.03 457.7L543.30 433.0L543.57 417.2L543.83 405.9L544.10 397.7L544.37 391.6L544.64 387.2L544.91 384.2L545.18 382.5L545.45 382.0L545.71 382.8L545.98 384.8L546.25 388.1L546.52 393.0L546.79 399.9L547.06 409.2L547.33 422.4L547.59 442.0L547.86 476.8L548.13 565.9L548.40 473.4L548.67 439.7L548.94 420.2L549.21 406.9L549.47 397.3L549.74 390.2L550.01 385.0L550.28 381.3L550.55 379.0L550.82 377.9L551.09 378.0L551.35 379.4L551.62 382.0L551.89 386.1L552.16 392.0L552.43 400.0L552.70 411.1L552.97 427.1L553.23 452.7L553.50 511.1L553.77 502.0L554.04 449.1L554.31 424.2L554.58 408.3L554.85 397.1L555.11 388.8L555.38 382.7L555.65 378.3L555.92 375.3L556.19 373.6L556.46 373.1L556.73 373.8L556.99 375.8L557.26 379.1L557.53 384.1L557.80 390.9L558.07 400.3L558.34 413.5L558.61 433.4L558.87 469.0L559.14 566.1L559.41 463.0L559.68 429.6L559.95 410.3L560.22 397.0L560.49 387.4L560.75 380.3L561.02 375.1L561.29 371.4L561.56 369.0L561.83 367.9L562.10 368.0L562.37 369.3L562.63 371.9L562.90 376.0L563.17 381.8L563.44 389.7L563.71 400.8L563.98 416.6L564.25 441.6L564.51 491.5L564.78 482.3L565.05 436.7L565.32 412.7L565.59 397.1L565.86 385.9L566.12 377.7L566.39 371.5L566.66 367.1L566.93 364.0L567.20 362.3L567.47 361.7L567.74 362.4L568.00 364.3L568.27 367.5L568.54 372.3L568.81 379.0L569.08 388.2L569.35 401.0L569.62 419.7L569.88 449.7L570.15 481.6L570.42 444.2L570.69 415.4L570.96 397.0L571.23 384.1L571.50 374.5L571.76 367.4L572.03 362.2L572.30 358.4L572.57 356.0L572.84 354.8L573.11 354.7L573.38 355.9L573.64 358.3L573.91 362.2L574.18 367.7L574.45 375.3L574.72 385.6L574.99 399.9L575.26 420.3L575.52 446.2L575.79 443.3L576.06 416.5L576.33 396.0L576.60 381.4L576.87 370.6L577.14 362.5L577.40 356.3L577.67 351.8L577.94 348.6L578.21 346.7L578.48 346.0L578.75 346.4L579.02 348.0L579.28 350.9L579.55 355.2L579.82 361.3L580.09 369.4L580.36 380.3L580.63 394.6L580.90 411.9L581.16 422.0L581.43 410.3L581.70 392.0L581.97 376.8L582.24 365.0L582.51 355.9L582.78 348.9L583.04 343.6L583.31 339.6L583.58 337.0L583.85 335.4L584.12 335.0L584.39 335.7L584.66 337.6L584.92 340.7L585.19 345.1L585.46 351.2L585.73 359.0L586.00 368.8L586.27 379.9L586.54 389.2L586.80 389.5L587.07 379.9L587.34 367.3L587.61 355.9L587.88 346.4L588.15 338.8L588.42 332.7L588.68 328.0L588.95 324.4L589.22 322.0L589.49 320.7L589.76 320.3L590.03 320.9L590.29 322.6L590.56 325.3L590.83 329.1L591.10 334.0L591.37 339.9L591.64 346.5L591.91 352.5L592.17 355.7L592.44 354.0L592.71 347.9L592.98 339.8L593.25 331.5L593.52 324.0L593.79 317.6L594.05 312.2L594.32 307.8L594.59 304.4L594.86 301.8L595.13 300.1L595.40 299.3L595.67 299.2L595.93 299.9L596.20 301.3L596.47 303.4L596.74 306.1L597.01 309.1L597.28 312.2L597.55 314.6L597.81 315.7L598.08 314.8L598.35 311.9L598.62 307.4L598.89 302.1L599.16 296.7L599.43 291.4L599.69 286.6L599.96 282.4L600.23 278.8L600.50 275.7L600.77 273.3L601.04 271.5L601.31 270.2L601.57 269.5L601.84 269.2L602.11 269.4L602.38 269.9L602.65 270.8L602.92 271.7L603.19 272.7L603.45 273.4L603.72 273.6L603.99 273.1L604.26 271.9L604.53 269.9L604.80 267.2L605.07 264.1L605.33 260.8L605.60 257.4L605.87 254.0L606.14 251.0L606.41 248.1L606.68 245.7L606.95 243.5L607.21 241.7L607.48 240.3L607.75 239.3L608.02 238.6L608.29 238.2L608.56 238.2L608.83 238.4L609.09 238.9L609.36 239.7L609.63 240.6L609.90 241.6L610.17 242.8L610.44 243.8L610.71 244.8L610.97 245.6L611.24 246.2L611.51 246.4L611.78 246.3L612.05 246.0L612.32 245.4L612.58 244.6L612.85 243.7L613.12 242.7L613.39 241.7L613.66 240.8L613.93 239.9L614.20 239.1L614.46 238.5L614.73 237.9L615.00 237.4L615.27 237.0L615.54 236.6L615.81 236.3L616.08 235.9L616.34 235.4L616.61 234.9L616.88 234.3L617.15 233.7L617.42 232.9L617.69 232.2L617.96 231.4L618.22 230.6L618.49 229.9L618.76 229.3L619.03 228.8L619.30 228.5L619.57 228.3L619.84 228.3L620.10 228.6L620.37 229.1L620.64 229.8L620.91 230.7L621.18 231.8L621.45 233.2L621.72 234.8L621.98 236.5L622.25 238.4L622.52 240.4L622.79 242.4L623.06 244.4L623.33 246.3L623.60 248.0L623.86 249.4L624.13 250.6L624.40 251.6L624.67 252.2L624.94 252.7L625.21 253.0L625.48 253.2L625.74 253.5L626.01 253.9L626.28 254.4L626.55 255.1L626.82 256.0L627.09 257.3L627.36 258.8L627.62 260.7L627.89 262.8L628.16 265.3L628.43 267.9L628.70 270.8L628.97 273.8L629.24 276.7L629.50 279.5L629.77 281.9L630.04 283.8L630.31 285.2L630.58 285.9L630.85 286.1L631.12 286.0L631.38 285.5L631.65 285.1L631.92 284.7L632.19 284.6L632.46 284.7L632.73 285.3L633.00 286.3L633.26 287.7L633.53 289.6L633.80 291.9L634.07 294.7L634.34 297.9L634.61 301.4L634.88 305.1L635.14 308.7L635.41 311.9L635.68 314.4L635.95 316.0L636.22 316.5L636.49 315.9L636.75 314.7L637.02 313.1L637.29 311.4L637.56 310.0L637.83 308.9L638.10 308.2L638.37 308.1L638.63 308.6L638.90 309.7L639.17 311.4L639.44 313.7L639.71 316.7L639.98 320.2L640.25 324.2L640.51 328.6L640.78 332.9L641.05 336.7L641.32 339.5L641.59 340.7L641.86 340.3L642.13 338.5L642.39 335.9L642.66 333.1L642.93 330.4L643.20 328.1L643.47 326.3L643.74 325.2L644.01 324.9L644.27 325.2L644.54 326.2L644.81 328.1L645.08 330.6L645.35 333.9L645.62 337.9L645.89 342.6L646.15 347.6L646.42 352.5L646.69 356.7L646.96 359.3L647.23 359.6L647.50 357.8L647.77 354.5L648.03 350.7L648.30 346.9L648.57 343.5L648.84 340.8L649.11 338.9L649.38 337.7L649.65 337.3L649.91 337.8L650.18 339.1L650.45 341.2L650.72 344.1L650.99 347.9L651.26 352.5L651.53 357.8L651.79 363.5L652.06 369.0L652.33 373.1L652.60 374.9L652.87 373.7L653.14 370.2L653.41 365.6L653.67 360.8L653.94 356.5L654.21 353.0L654.48 350.2L654.75 348.3L655.02 347.3L655.29 347.2L655.55 347.9L655.82 349.6L656.09 352.1L656.36 355.6L656.63 359.9L656.90 365.2L657.17 371.2L657.43 377.5L657.70 383.2L657.97 386.8L658.24 386.9L658.51 383.8L658.78 378.8L659.04 373.3L659.31 368.1L659.58 363.6L659.85 360.1L660.12 357.5L660.39 355.9L660.66 355.2L660.92 355.4L661.19 356.6L661.46 358.6L661.73 361.7L662.00 365.7L662.27 370.8L662.54 376.8L662.80 383.5L663.07 390.2L663.34 395.6L663.61 397.8L663.88 395.8L664.15 390.8L664.42 384.7L664.68 378.6L664.95 373.4L665.22 369.1L665.49 365.8L665.76 363.6L666.03 362.3L666.30 362.0L666.56 362.6L666.83 364.2L667.10 366.8L667.37 370.4L667.64 375.1L667.91 380.8L668.18 387.6L668.44 394.9L668.71 401.8L668.98 406.2L669.25 406.2L669.52 401.9L669.79 395.4L670.06 388.7L670.32 382.6L670.59 377.5L670.86 373.6L671.13 370.7L671.40 368.8L671.67 367.9L671.94 368.1L672.20 369.2L672.47 371.2L672.74 374.4L673.01 378.6L673.28 384.0L673.55 390.5L673.82 398.0L674.08 405.8L674.35 412.2L674.62 414.7L674.89 411.9L675.16 405.6L675.43 398.3L675.70 391.4L675.96 385.6L676.23 380.9L676.50 377.3L676.77 374.9L677.04 373.5L677.31 373.1L677.58 373.7L677.84 375.3L678.11 377.9L678.38 381.6L678.65 386.5L678.92 392.6L679.19 399.9L679.46 408.1L679.72 416.0L679.99 421.1L680.26 420.8L680.53 415.4L680.80 407.7L681.07 400.1L681.33 393.5L681.60 388.0L681.87 383.8L682.14 380.7L682.41 378.7L682.68 377.8L682.95 377.9L683.21 379.0L683.48 381.1L683.75 384.3L684.02 388.7L684.29 394.3L684.56 401.2L684.83 409.3L685.09 417.9L685.36 425.3L685.63 428.0L685.90 424.4L686.17 417.0L686.44 408.7L686.71 401.3L686.97 395.0L687.24 390.1L687.51 386.4L687.78 383.8L688.05 382.3L688.32 381.9L688.59 382.5L688.85 384.1L689.12 386.8L689.39 390.6L689.66 395.7L689.93 402.1L690.20 409.8L690.47 418.6L690.73 427.4L691.00 433.1L691.27 432.4L691.54 426.0L691.81 417.4L692.08 409.1L692.35 402.1L692.61 396.4L692.88 392.0L693.15 388.8L693.42 386.8L693.69 385.8L693.96 385.8L694.23 386.9L694.49 389.1L694.76 392.4L695.03 396.9L695.30 402.7L695.57 410.0L695.84 418.6L696.11 427.9L696.37 436.0L696.64 438.8L696.91 434.4L697.18 426.0L697.45 417.1L697.72 409.2L697.99 402.7L698.25 397.6L698.52 393.8L698.79 391.1L699.06 389.6L699.33 389.1L699.60 389.7L699.87 391.4L700.13 394.1L700.40 398.1L700.67 403.3L700.94 409.9L701.21 418.0L701.48 427.4L701.75 436.9L702.01 443.0L702.28 442.0L702.55 434.6L702.82 425.2L703.09 416.5L703.36 409.1L703.62 403.2L703.89 398.7L704.16 395.5L704.43 393.4L704.70 392.4L704.97 392.5L705.24 393.6L705.50 395.8L705.77 399.2L706.04 403.8L706.31 409.8L706.58 417.3L706.85 426.4L707.12 436.3L707.38 445.0L707.65 447.8L707.92 442.7L708.19 433.4L708.46 423.9L708.73 415.7L709.00 409.0L709.26 403.8L709.53 399.9L709.80 397.3L710.07 395.7L710.34 395.3L710.61 395.9L710.88 397.6L711.14 400.4L711.41 404.4L711.68 409.8L711.95 416.6L712.22 425.0L712.49 434.9L712.76 445.0L713.02 451.5L713.29 450.0L713.56 441.7L713.83 431.7L714.10 422.6L714.37 415.0L714.64 409.0L714.90 404.5L715.17 401.2L715.44 399.1L715.71 398.1L715.98 398.2L716.25 399.3L716.52 401.6L716.78 405.0L717.05 409.8L717.32 415.9L717.59 423.7L717.86 433.1L718.13 443.6L718.40 452.8L718.66 455.6L718.93 449.6L719.20 439.6L719.47 429.7L719.74 421.2L720.01 414.4L720.28 409.1L720.54 405.2L720.81 402.5L721.08 401.0L721.35 400.6L721.62 401.2L721.89 402.9L722.16 405.8L722.42 409.9L722.69 415.3L722.96 422.4L723.23 431.1L723.50 441.4L723.77 452.0L724.04 458.9L724.30 456.8L724.57 447.7L724.84 437.1L725.11 427.7L725.38 420.0L725.65 414.0L725.92 409.4L726.18 406.1L726.45 404.0L726.72 403.0L726.99 403.1L727.26 404.3L727.53 406.6L727.79 410.1L728.06 414.9L728.33 421.2L728.60 429.2L728.87 438.9L729.14 449.9L729.41 459.6L729.67 462.2L729.94 455.5L730.21 444.8L730.48 434.5L730.75 425.9L731.02 419.0L731.29 413.7L731.55 409.8L731.82 407.1L732.09 405.6L732.36 405.1L732.63 405.8L732.90 407.5L733.17 410.5L733.43 414.6L733.70 420.2L733.97 427.4L734.24 436.4L734.51 447.1L734.78 458.2L735.05 465.3L735.31 462.6L735.58 452.8L735.85 441.7L736.12 432.1L736.39 424.3L736.66 418.2L736.93 413.6L737.19 410.3L737.46 408.2L737.73 407.3L738.00 407.4L738.27 408.6L738.54 411.0L738.81 414.5L739.07 419.4L739.34 425.9L739.61 434.0L739.88 444.1L740.15 455.5L740.42 465.6L740.69 468.0L740.95 460.5L741.22 449.3L741.49 438.7L741.76 429.9L742.03 423.0L742.30 417.6L742.57 413.7L742.83 411.0L743.10 409.5L743.37 409.1L743.64 409.8L743.91 411.6L744.18 414.6L744.45 418.9L744.71 424.5L744.98 431.9L745.25 441.1L745.52 452.2L745.79 463.8L746.06 470.9L746.33 467.6L746.59 457.1L746.86 445.7L747.13 435.9L747.40 428.0L747.67 421.9L747.94 417.3L748.21 414.0L748.47 411.9L748.74 411.0L749.01 411.2L749.28 412.4L749.55 414.8L749.82 418.5L750.08 423.4L750.35 430.0L750.62 438.4L750.89 448.7L751.16 460.5L751.43 471.0L751.70 473.1L751.96 464.9L752.23 453.1L752.50 442.3L752.77 433.4L753.04 426.4L753.31 421.1L753.58 417.2L753.84 414.5L754.11 413.0L754.38 412.6L754.65 413.4L754.92 415.2L755.19 418.2L755.46 422.6L755.72 428.4L755.99 435.9L756.26 445.3L756.53 456.7L756.80 468.7L757.07 476.0L757.34 472.0L757.60 460.8L757.87 449.1L758.14 439.2L758.41 431.3L758.68 425.1L758.95 420.5L759.22 417.2L759.48 415.2L759.75 414.3L760.02 414.5L760.29 415.8L760.56 418.2L760.83 421.9L761.10 427.0L761.36 433.7L761.63 442.2L761.90 452.8L762.17 465.0L762.44 475.8L762.71 477.6L762.98 468.6L763.24 456.4L763.51 445.4L763.78 436.4L764.05 429.4L764.32 424.1L764.59 420.2L764.86 417.5L765.12 416.1L765.39 415.7L765.66 416.5L765.93 418.4L766.20 421.5L766.47 425.9L766.74 431.8L767.00 439.4L767.27 449.1L767.54 460.8L767.81 473.2L768.08 480.5L768.35 475.8L768.62 464.0L768.88 452.0L769.15 442.0L769.42 434.1L769.69 427.9L769.96 423.3L770.23 420.1L770.50 418.0L770.76 417.2L771.03 417.4L771.30 418.7L771.57 421.2L771.84 425.0L772.11 430.2L772.38 436.9L772.64 445.6L772.91 456.5L773.18 469.1L773.45 480.2L773.72 481.5L773.99 471.8L774.25 459.2L774.52 448.0L774.79 439.1L775.06 432.0L775.33 426.7L775.60 422.8L775.87 420.2L776.13 418.8L776.40 418.4L776.67 419.2L776.94 421.2L777.21 424.3L777.48 428.8L777.75 434.8L778.01 442.6L778.28 452.4L778.55 464.5L778.82 477.2L779.09 484.5L779.36 479.1L779.63 466.7L779.89 454.6L780.16 444.5L780.43 436.5L780.70 430.3L780.97 425.8L781.24 422.5L781.51 420.5L781.77 419.7L782.04 419.9L782.31 421.3L782.58 423.9L782.85 427.7L783.12 433.0L783.39 439.9L783.65 448.7L783.92 459.8L784.19 472.8L784.46 484.1L784.73 485.0L785.00 474.5L785.27 461.6L785.53 450.3L785.80 441.3L786.07 434.3L786.34 429.0L786.61 425.1L786.88 422.5L787.15 421.1L787.41 420.8L787.68 421.7L787.95 423.6L788.22 426.8L788.49 431.4L788.76 437.5L789.03 445.4L789.29 455.5L789.56 467.8L789.83 480.9L790.10 488.0L790.37 481.9L790.64 469.1L790.91 456.7L791.17 446.5L791.44 438.6L791.71 432.4L791.98 427.9L792.25 424.7L792.52 422.7L792.79 421.9L793.05 422.2L793.32 423.6L793.59 426.2L793.86 430.1L794.13 435.4L794.40 442.5L794.67 451.5L794.93 462.8L795.20 476.1L795.47 487.6L795.74 488.0L796.01 476.9L796.28 463.6L796.54 452.3L796.81 443.2L797.08 436.2L797.35 430.9L797.62 427.1L797.89 424.5L798.16 423.2L798.42 422.9L798.69 423.8L798.96 425.8L799.23 429.1L799.50 433.7L799.77 439.9L800.04 447.9L800.30 458.2L800.57 470.8L800.84 484.3L801.11 491.2L801.38 484.4L801.65 471.0L801.92 458.5L802.18 448.3L802.45 440.4L802.72 434.2L802.99 429.7L803.26 426.5L803.53 424.6L803.80 423.8L804.06 424.2L804.33 425.6L804.60 428.3L804.87 432.2L805.14 437.6L805.41 444.8L805.68 454.0L805.94 465.6L806.21 479.2L806.48 490.9L806.75 490.6L807.02 478.8L807.29 465.3L807.56 453.9L807.82 444.9L808.09 437.9L808.36 432.6L808.63 428.8L808.90 426.3L809.17 424.9L809.44 424.7L809.70 425.6L809.97 427.7L810.24 431.0L810.51 435.7L810.78 442.0L811.05 450.2L811.32 460.6L811.58 473.6L811.85 487.3L812.12 494.1L812.39 486.5L812.66 472.7L812.93 460.0L813.20 449.8L813.46 441.9L813.73 435.8L814.00 431.3L814.27 428.1L814.54 426.2L814.81 425.5L815.08 425.8L815.34 427.4L815.61 430.1L815.88 434.1L816.15 439.6L816.42 446.8L816.69 456.2L816.96 468.0L817.22 482.0L817.49 493.8L817.76 492.9L818.03 480.5L818.30 466.7L818.57 455.2L818.83 446.2L819.10 439.3L819.37 434.0L819.64 430.2L819.91 427.7L820.18 426.4L820.45 426.3L820.71 427.2L820.98 429.3L821.25 432.7L821.52 437.5L821.79 443.9L822.06 452.2L822.33 462.8L822.59 476.1L822.86 490.1L823.13 496.6L823.40 488.2L823.67 474.0L823.94 461.2L824.21 451.0L824.47 443.1L824.74 437.0L825.01 432.6L825.28 429.5L825.55 427.6L825.82 426.9L826.09 427.3L826.35 428.8L826.62 431.6L826.89 435.7L827.16 441.3L827.43 448.6L827.70 458.1L827.97 470.2L828.23 484.5L828.50 496.4L828.77 494.9L829.04 481.8L829.31 467.8L829.58 456.3L829.85 447.3L830.11 440.4L830.38 435.2L830.65 431.4L830.92 429.0L831.19 427.7L831.46 427.6L831.73 428.6L831.99 430.7L832.26 434.2L832.53 439.0L832.80 445.5L833.07 453.9L833.34 464.8L833.61 478.3L833.87 492.7L834.14 498.9L834.41 489.6L834.68 475.1L834.95 462.2L835.22 452.0L835.49 444.1L835.75 438.1L836.02 433.6L836.29 430.6L836.56 428.7L836.83 428.1L837.10 428.5L837.37 430.1L837.63 432.9L837.90 437.1L838.17 442.7L838.44 450.2L838.71 459.9L838.98 472.2L839.25 486.8L839.51 498.8L839.78 496.5L840.05 482.8L840.32 468.7L840.59 457.2L840.86 448.2L841.12 441.3L841.39 436.1L841.66 432.4L841.93 430.0L842.20 428.7L842.47 428.6L842.74 429.7L843.00 431.9L843.27 435.4L843.54 440.3L843.81 446.9L844.08 455.5L844.35 466.5L844.62 480.3L844.88 495.0L845.15 500.8L845.42 490.8L845.69 475.9L845.96 462.9L846.23 452.7L846.50 444.9L846.76 438.9L847.03 434.5L847.30 431.4L847.57 429.6L847.84 429.0L848.11 429.5L848.38 431.1L848.64 434.0L848.91 438.2L849.18 443.9L849.45 451.5L849.72 461.4L849.99 473.9L850.26 488.9L850.52 501.0L850.79 497.9L851.06 483.6L851.33 469.3L851.60 457.8L851.87 448.8L852.14 442.0L852.40 436.8L852.67 433.1L852.94 430.8L853.21 429.6L853.48 429.5L853.75 430.6L854.02 432.9L854.28 436.4L854.55 441.4L854.82 448.0L855.09 456.8L855.36 468.0L855.63 482.1L855.90 497.1L856.16 502.5L856.43 491.6L856.70 476.4L856.97 463.4L857.24 453.2L857.51 445.4L857.78 439.5L858.04 435.1L858.31 432.1L858.58 430.3L858.85 429.7L859.12 430.3L859.39 431.9L859.66 434.9L859.92 439.1L860.19 445.0L860.46 452.7L860.73 462.7L861.00 475.5L861.27 490.8L861.54 502.9L861.80 499.0L862.07 484.1L862.34 469.7L862.61 458.2L862.88 449.2L863.15 442.4L863.42 437.3L863.68 433.7L863.95 431.3L864.22 430.2L864.49 430.1L864.76 431.3L865.03 433.6L865.29 437.2L865.56 442.2L865.83 449.0L866.10 457.9L866.37 469.3L866.64 483.7L866.91 499.0L867.17 503.9L867.44 492.2L867.71 476.7L867.98 463.7L868.25 453.5L868.52 445.7L868.79 439.8L869.05 435.5L869.32 432.5L869.59 430.8L869.86 430.2L870.13 430.8L870.40 432.6L870.67 435.5L870.93 439.9L871.20 445.8L871.47 453.6L871.74 463.8L872.01 476.8L872.28 492.5L872.55 504.6L872.81 499.8L873.08 484.4L873.35 469.9L873.62 458.3L873.89 449.4L874.16 442.7L874.43 437.6L874.69 434.0L874.96 431.7L875.23 430.6L875.50 430.6" fill="none" stroke="#0072bd" stroke-width="1.4" stroke-linejoin="round"/>
<g stroke="#262626" stroke-width="1">
<rect x="325.5" y="218.5" width="550" height="352" fill="none"/>
<path d="M380.5 570 v-5.5 M435.5 570 v-5.5 M490.5 570 v-5.5 M545.5 570 v-5.5 M600.5 570 v-5.5 M655.5 570 v-5.5 M710.5 570 v-5.5 M765.5 570 v-5.5 M820.5 570 v-5.5"/>
<path d="M380.5 219 v5.5 M435.5 219 v5.5 M490.5 219 v5.5 M545.5 219 v5.5 M600.5 219 v5.5 M655.5 219 v5.5 M710.5 219 v5.5 M765.5 219 v5.5 M820.5 219 v5.5"/>
<path d="M326 276.5 h5.5 M326 335.5 h5.5 M326 394.5 h5.5 M326 453.5 h5.5 M326 512.5 h5.5"/>
<path d="M875 276.5 h-5.5 M875 335.5 h-5.5 M875 394.5 h-5.5 M875 453.5 h-5.5 M875 512.5 h-5.5"/>
</g>
<g font-size="13" fill="#3a3a3a" text-anchor="middle">
<text x="325.5" y="588">-50</text><text x="380.5" y="588">-40</text><text x="435.5" y="588">-30</text><text x="490.5" y="588">-20</text><text x="545.5" y="588">-10</text><text x="600.5" y="588">0</text><text x="655.5" y="588">10</text><text x="710.5" y="588">20</text><text x="765.5" y="588">30</text><text x="820.5" y="588">40</text><text x="875.5" y="588">50</text>
</g>
<g font-size="13" fill="#3a3a3a" text-anchor="end">
<text x="319.5" y="223.3">-100</text><text x="319.5" y="281.3">-110</text><text x="319.5" y="340.3">-120</text><text x="319.5" y="399.3">-130</text><text x="319.5" y="458.3">-140</text><text x="319.5" y="517.3">-150</text><text x="319.5" y="575.6">-160</text>
</g>
<text x="601" y="605.5" font-size="14.5" fill="#333" text-anchor="middle">Frequency (MHz)</text>
<text transform="translate(285.5 390.5) rotate(-90)" font-size="14" fill="#333" text-anchor="middle">Power/Frequency (dB/Hz)</text>
<text x="601" y="211.5" font-size="13.8" letter-spacing="0.45" font-weight="bold" fill="#111" text-anchor="middle">Power Spectral Density of Baseband Signal</text>
<!-- axes toolbar -->
<g fill="none" stroke="#6e6e6e" stroke-width="1.1" stroke-linejoin="round">
<path d="M759.5 207 v6.5 h13 v-5"/>
<path d="M761.5 211 q0.5 -7 8 -7.5 M767.5 201 l3 3 l-3 2.5"/>
<path d="M771 213 l2 -2 v2 z" fill="#6e6e6e"/>
<path d="M781.5 199.5 h12 v15 h-12 v-5.5 l-2.5 -2 2.5 -2 z"/>
<path d="M784 205.5 h7 M784 209.5 h7"/>
<path d="M803 214.5 L799 209.5 Q798 207.5 800 207.5 L802 209 L802 202 Q802 200.5 803.5 200.5 Q805 200.5 805 202 L805 206.5 L805 200.5 Q805 199 806.5 199 Q808 199 808 200.5 L808 206.5 L808 201 Q808 199.5 809.5 199.5 Q811 199.5 811 201 L811 206.5 L811 203 Q811 201.5 812.5 201.5 Q814 201.5 814 203 L814 210.5 L812 214.5 Z"/>
<circle cx="824.5" cy="205.5" r="6"/><path d="M828.8 209.8 l4.7 4.7 M821.5 205.5 h6 M824.5 202.5 v6"/>
<circle cx="844.5" cy="205.5" r="6"/><path d="M848.8 209.8 l4.7 4.7 M841.5 205.5 h6"/>
<path d="M858.5 207.5 l7.5 -7.5 7.5 7.5 M860.5 205.5 v9 h4 v-5 h3 v5 h4 v-9"/>
<path d="M870.5 200.5 h3 v3" />
</g>
</svg>
</body></html>
